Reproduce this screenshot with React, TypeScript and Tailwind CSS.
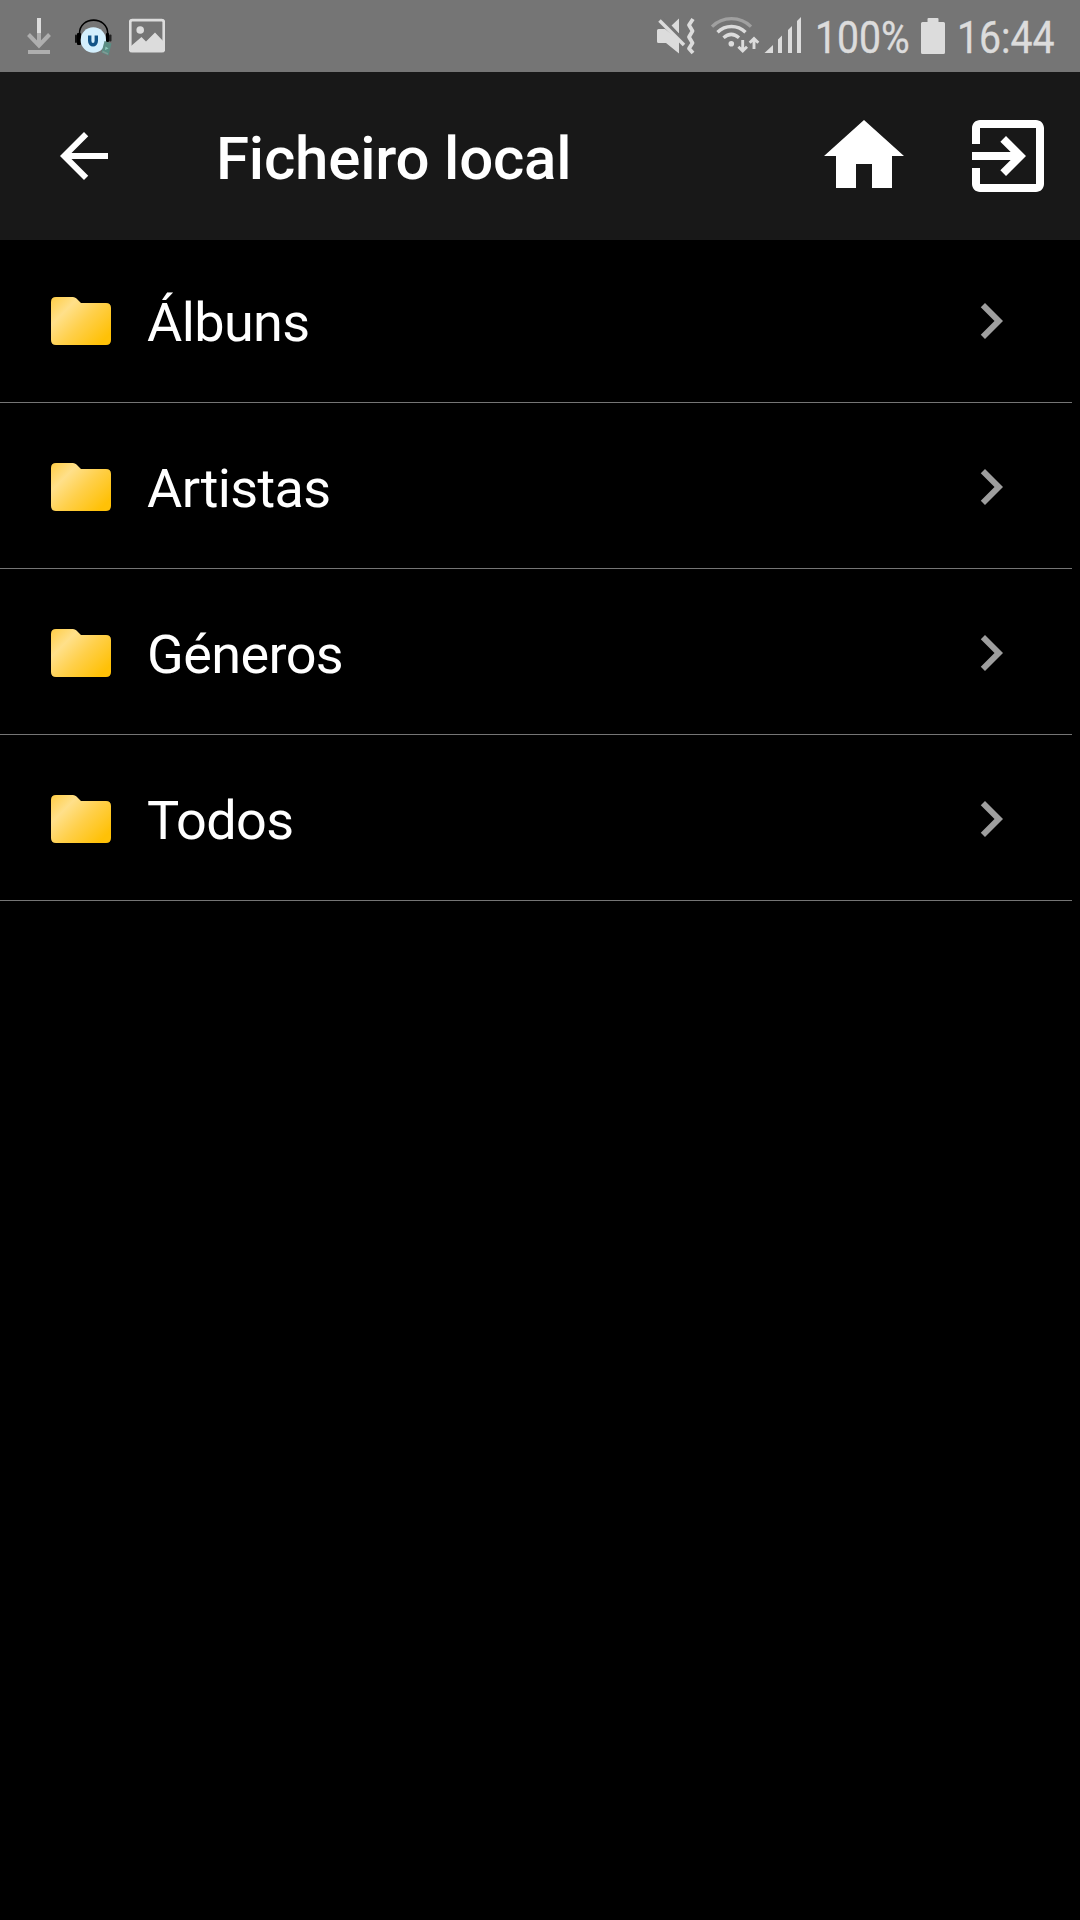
import React from "react";

function DownloadIcon() {
  return (
    <svg className="h-[72px] w-[28px]" viewBox="25 0 28 72" fill="none">
      <path d="M28.5 34.5 39 45.5 49.5 34.5" stroke="#aeaeae" strokeWidth="4" />
      <path d="M39 33V46" stroke="#aeaeae" strokeWidth="4" />
      <path d="M39 18V33" stroke="#dcdcdc" strokeWidth="4" />
      <path d="M28 52H50" stroke="#aeaeae" strokeWidth="4" />
    </svg>
  );
}

function HeadphonesIcon() {
  return (
    <svg className="h-[72px] w-[40px]" viewBox="74 0 40 72" fill="none">
      <path d="M79.5 35V33.500C79.500 15.700 107.700 15.700 107.700 33.500V35" stroke="#000" strokeWidth="1.600" />
      <rect x="75" y="34.500" width="2" height="8.500" rx="1" fill="#111" />
      <rect x="77" y="33" width="4" height="12" rx="1" fill="#000" />
      <rect x="106" y="33" width="3" height="9" rx="1" fill="#000" />
      <rect x="109" y="34.500" width="2.500" height="7" rx="1" fill="#222" />
      <circle cx="93.300" cy="40" r="12.700" fill="#d3effd" />
      <path d="M89.700 35.500V40.800C89.700 46 96.300 46 96.300 40.800V35.500" stroke="#125487" strokeWidth="3.400" />
      <path d="M104.500 41 111.500 43.500 108.500 55.500 101.500 52.500Z" fill="#5b8d84" />
      <path d="M102.500 51.500 108 54" stroke="#809b96" strokeWidth="1.500" />
      <path d="M105.500 46.500 108.500 48.500 105 50Z" fill="#8cc9bb" />
    </svg>
  );
}

function PictureIcon() {
  return (
    <svg className="h-[72px] w-[36px]" viewBox="129 0 36 72" fill="none">
      <rect x="130.200" y="20.200" width="33.600" height="31" rx="2" stroke="#dcdcdc" strokeWidth="2.800" />
      <circle cx="140.200" cy="30" r="3.800" fill="#dcdcdc" />
      <path d="M131 46 141.500 37 146 41.500 155 32.500 164 42V51H131Z" fill="#dcdcdc" />
    </svg>
  );
}

function MuteIcon() {
  return (
    <svg className="h-[72px] w-[40px]" viewBox="656 0 40 72" fill="none">
      <path d="M679 18.500V34L671.500 25.500Z" fill="#dcdcdc" />
      <path d="M658.500 29H665L679 40V53.500L666 43H658.500Q657 43 657 41.500V30.500Q657 29 658.500 29Z" fill="#dcdcdc" />
      <path d="M662 18.500 686 42.500" stroke="#757575" strokeWidth="3" />
      <path d="M659.500 20.500 684 45" stroke="#dcdcdc" strokeWidth="3.600" />
      <path
        d="M693 19 689 25 692.500 31 689 37 692.500 43 689 48.500 693 53"
        stroke="#dcdcdc"
        strokeWidth="3.800"
        strokeLinejoin="round"
      />
    </svg>
  );
}

function WifiIcon() {
  return (
    <svg className="h-[72px] w-[50px]" viewBox="710 0 50 72" fill="none">
      <path d="M712 26.700C722.500 16 740.500 16 751 26.700" stroke="#a0a0a0" strokeWidth="3.200" />
      <path d="M717.500 32.200C725.500 24.500 737.500 24.500 745.500 32.200" stroke="#dcdcdc" strokeWidth="3.400" />
      <path d="M723.500 37.700C728.500 33.400 734 33.400 739 37.700" stroke="#dcdcdc" strokeWidth="3.400" />
      <circle cx="731.300" cy="43.700" r="2.800" fill="#dcdcdc" />
      <path d="M742.700 40V51M738.400 46.700 742.700 51 747 46.700M754 49V38.500M749.700 42.800 754 38.500 758.300 42.800" stroke="#dcdcdc" strokeWidth="2.900" />
    </svg>
  );
}

function SignalIcon() {
  return (
    <svg className="h-[72px] w-[38px]" viewBox="764 0 38 72" fill="#dcdcdc">
      <path d="M764.500 53 773 45V53ZM778 39.500 782 35.500V53H778ZM788 30 792 26V53H788ZM797 21 801 17V53H797Z" />
    </svg>
  );
}

function BatteryIcon() {
  return (
    <svg className="h-[72px] w-[24px]" viewBox="921 0 24 72" fill="#dcdcdc">
      <path d="M928.500 18H937.500Q938.500 18 938.500 19V22H943.500Q945 22 945 23.500V52.500Q945 54 943.500 54H922.500Q921 54 921 52.500V23.500Q921 22 922.500 22H927.500V19Q927.500 18 928.500 18Z" />
    </svg>
  );
}

function BackIcon() {
  return (
    <svg className="size-[72px]" viewBox="0 0 24 24" fill="#fff">
      <path d="M20 11H7.830l5.590-5.590L12 4l-8 8 8 8 1.410-1.410L7.830 13H20v-2z" />
    </svg>
  );
}

function HomeIcon() {
  return (
    <svg className="size-24" viewBox="0 0 24 24" fill="#fff">
      <path d="M10 20v-6h4v6h5v-8h3L12 3 2 12h3v8z" />
    </svg>
  );
}

function ExitIcon() {
  return (
    <svg className="size-24" viewBox="0 0 24 24" fill="#fff">
      <path d="M10.090 15.590L11.500 17l5-5-5-5-1.410 1.410L12.670 11H3v2h9.670l-2.580 2.590zM19 3H5c-1.110 0-2 .9-2 2v4h2V5h14v14H5v-4H3v4c0 1.100.89 2 2 2h14c1.100 0 2-.9 2-2V5c0-1.100-.9-2-2-2z" />
    </svg>
  );
}

function FolderIcon() {
  return (
    <svg className="h-12 w-[60px]" viewBox="0 0 60 48">
      <defs>
        <linearGradient id="folder" gradientUnits="userSpaceOnUse" x1="4" y1="0" x2="52" y2="48">
          <stop offset="0" stopColor="#ffd04f" />
          <stop offset="0.250" stopColor="#ffe08a" />
          <stop offset="0.550" stopColor="#ffd04c" />
          <stop offset="0.950" stopColor="#ffc107" />
        </linearGradient>
      </defs>
      <path
        fill="url(#folder)"
        d="M5 0H22Q24 0 25.500 1.500L30 6H55Q60 6 60 11V43Q60 48 55 48H5Q0 48 0 43V5Q0 0 5 0Z"
      />
    </svg>
  );
}

function ChevronIcon() {
  return (
    <svg className="size-[72px]" viewBox="0 0 24 24" fill="#9e9e9e">
      <path d="M10 6L8.590 7.410 13.170 12l-4.580 4.590L10 18l6-6z" />
    </svg>
  );
}

function StatusText({ children, className }: { children: string; className: string }) {
  return (
    <div className={className}>
      <span className="inline-block origin-left scale-x-[0.87] pt-[3px] text-[45px] leading-[72px] whitespace-nowrap text-[#dcdcdc] [-webkit-text-stroke:0.4px_#dcdcdc]">
        {children}
      </span>
    </div>
  );
}

const folders = ["Álbuns", "Artistas", "Géneros", "Todos"];

export default function App() {
  return (
    <div className="flex h-[1920px] w-[1080px] flex-col overflow-hidden bg-black font-['Roboto',sans-serif] text-white">
      <div className="flex h-[72px] shrink-0 items-center bg-[#757575] pl-[25px]">
        <div className="flex items-center">
          <DownloadIcon />
          <div className="ml-[21px] flex"><HeadphonesIcon /></div>
          <div className="ml-[15px] flex"><PictureIcon /></div>
        </div>
        <div className="ml-auto flex items-center">
          <MuteIcon />
          <div className="ml-[14px] flex"><WifiIcon /></div>
          <div className="ml-1 flex"><SignalIcon /></div>
          <StatusText className="ml-[13px] w-[106px]">100%</StatusText>
          <BatteryIcon />
          <StatusText className="ml-[12px] w-[123px]">16:44</StatusText>
        </div>
      </div>

      <header className="z-10 flex h-[168px] shrink-0 items-center bg-[#181818] pr-6 pl-12">
        <BackIcon />
        <h1 className="ml-24 pt-1.5 text-[60px] leading-[70px] font-medium tracking-[-0.2px] whitespace-nowrap">Ficheiro local</h1>
        <div className="ml-auto flex items-center gap-12">
          <HomeIcon />
          <ExitIcon />
        </div>
      </header>

      <ul className="-mt-[3px] mr-2">
        {folders.map((name) => (
          <li key={name} className="flex h-[166px] items-center border-b border-[#757575] pt-[3px] pr-[45px] pl-[51px]">
            <FolderIcon />
            <span className="ml-9 pt-1 text-[54px] leading-[64px] tracking-[-0.6px]">{name}</span>
            <div className="ml-auto"><ChevronIcon /></div>
          </li>
        ))}
      </ul>
    </div>
  );
}
